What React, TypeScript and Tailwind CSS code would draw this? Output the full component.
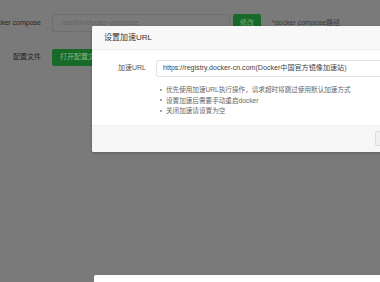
import React from 'react';

const font = { fontFamily: '"Liberation Sans", "Noto Sans CJK SC", sans-serif' };

const tips = [
  '优先使用加速URL执行操作，请求超时将跳过使用默认加速方式',
  '设置加速后需要手动重启docker',
  '关闭加速请设置为空',
];

const App: React.FC = () => {
  return (
    <div style={font} className="relative w-[380px] h-[282px] overflow-hidden bg-[#7a7a7a]">
      {/* page behind the mask (already dimmed) */}
      <div className="pt-[14px] flex flex-col gap-[17px]">
        <div className="flex items-center h-[18px]">
          <div className="w-[41px] flex justify-end">
            <span className="whitespace-nowrap text-[7px] text-[#262626]">docker compose</span>
          </div>
          <div className="ml-[11px] w-[178px] h-[18px] border border-[#6e6e6e] rounded-[2px] flex items-center pl-[9px] text-[7px] text-[#636363]">
            /usr/bin/docker-compose
          </div>
          <div className="ml-[3px] w-[28px] h-[18px] bg-[#186a29] rounded-[2px] flex items-center justify-center text-[7px] text-[#76a982]">
            修改
          </div>
          <span className="ml-[11px] text-[7px] text-[#3a3a3a] whitespace-nowrap">*docker compose路径</span>
        </div>
        <div className="flex items-center h-[17px]">
          <div className="w-[41px] flex justify-end">
            <span className="whitespace-nowrap text-[7px] text-[#262626]">配置文件</span>
          </div>
          <div className="ml-[11px] h-[17px] px-[8px] bg-[#186a29] rounded-[2px] flex items-center text-[7px] text-[#86b892] whitespace-nowrap">
            打开配置文件
          </div>
        </div>
      </div>

      {/* dialog */}
      <div className="absolute left-[92px] top-[26px] w-[340px] bg-white rounded-[2px] shadow-[0_1px_3px_rgba(0,0,0,0.25)] overflow-hidden">
        <div className="h-[24px] bg-[#f8f8f8] border-b border-[#f0f0f0] pl-[12px] flex items-center text-[8px] text-[#333]">
          设置加速URL
        </div>
        <div className="pt-[10px] pb-[9px]">
          <div className="flex items-center">
            <div className="w-[54px] text-right text-[7px] text-[#555]">加速URL</div>
            <div className="ml-[10px] w-[260px] h-[17px] border border-[#e3e3e3] rounded-[2px] flex items-center pl-[6px] text-[7.1px] text-[#444] whitespace-nowrap">
              https://registry.docker-cn.com(Docker中国官方镜像加速站)
            </div>
          </div>
          <ul className="mt-[8px] ml-[68px]">
            {tips.map(t => (
              <li key={t} className="flex items-center h-[10.3px] text-[6.6px] text-[#666] whitespace-nowrap">
                <span className="w-[2px] h-[2px] rounded-full bg-[#888] mr-[4px]" />
                {t}
              </li>
            ))}
          </ul>
        </div>
        <div className="h-[27px] bg-[#f5f6f5] border-t border-[#f0f0f0] flex items-center justify-end pr-[12px]">
          <div className="w-[45px] h-[15px] bg-[#f0f0f0] border border-[#dcdcdc] rounded-[2px]" />
        </div>
      </div>

      {/* another layer below */}
      <div className="absolute left-[94px] top-[275px] w-[320px] h-[40px] bg-white rounded-[2px]" />
    </div>
  );
};

export default App;
